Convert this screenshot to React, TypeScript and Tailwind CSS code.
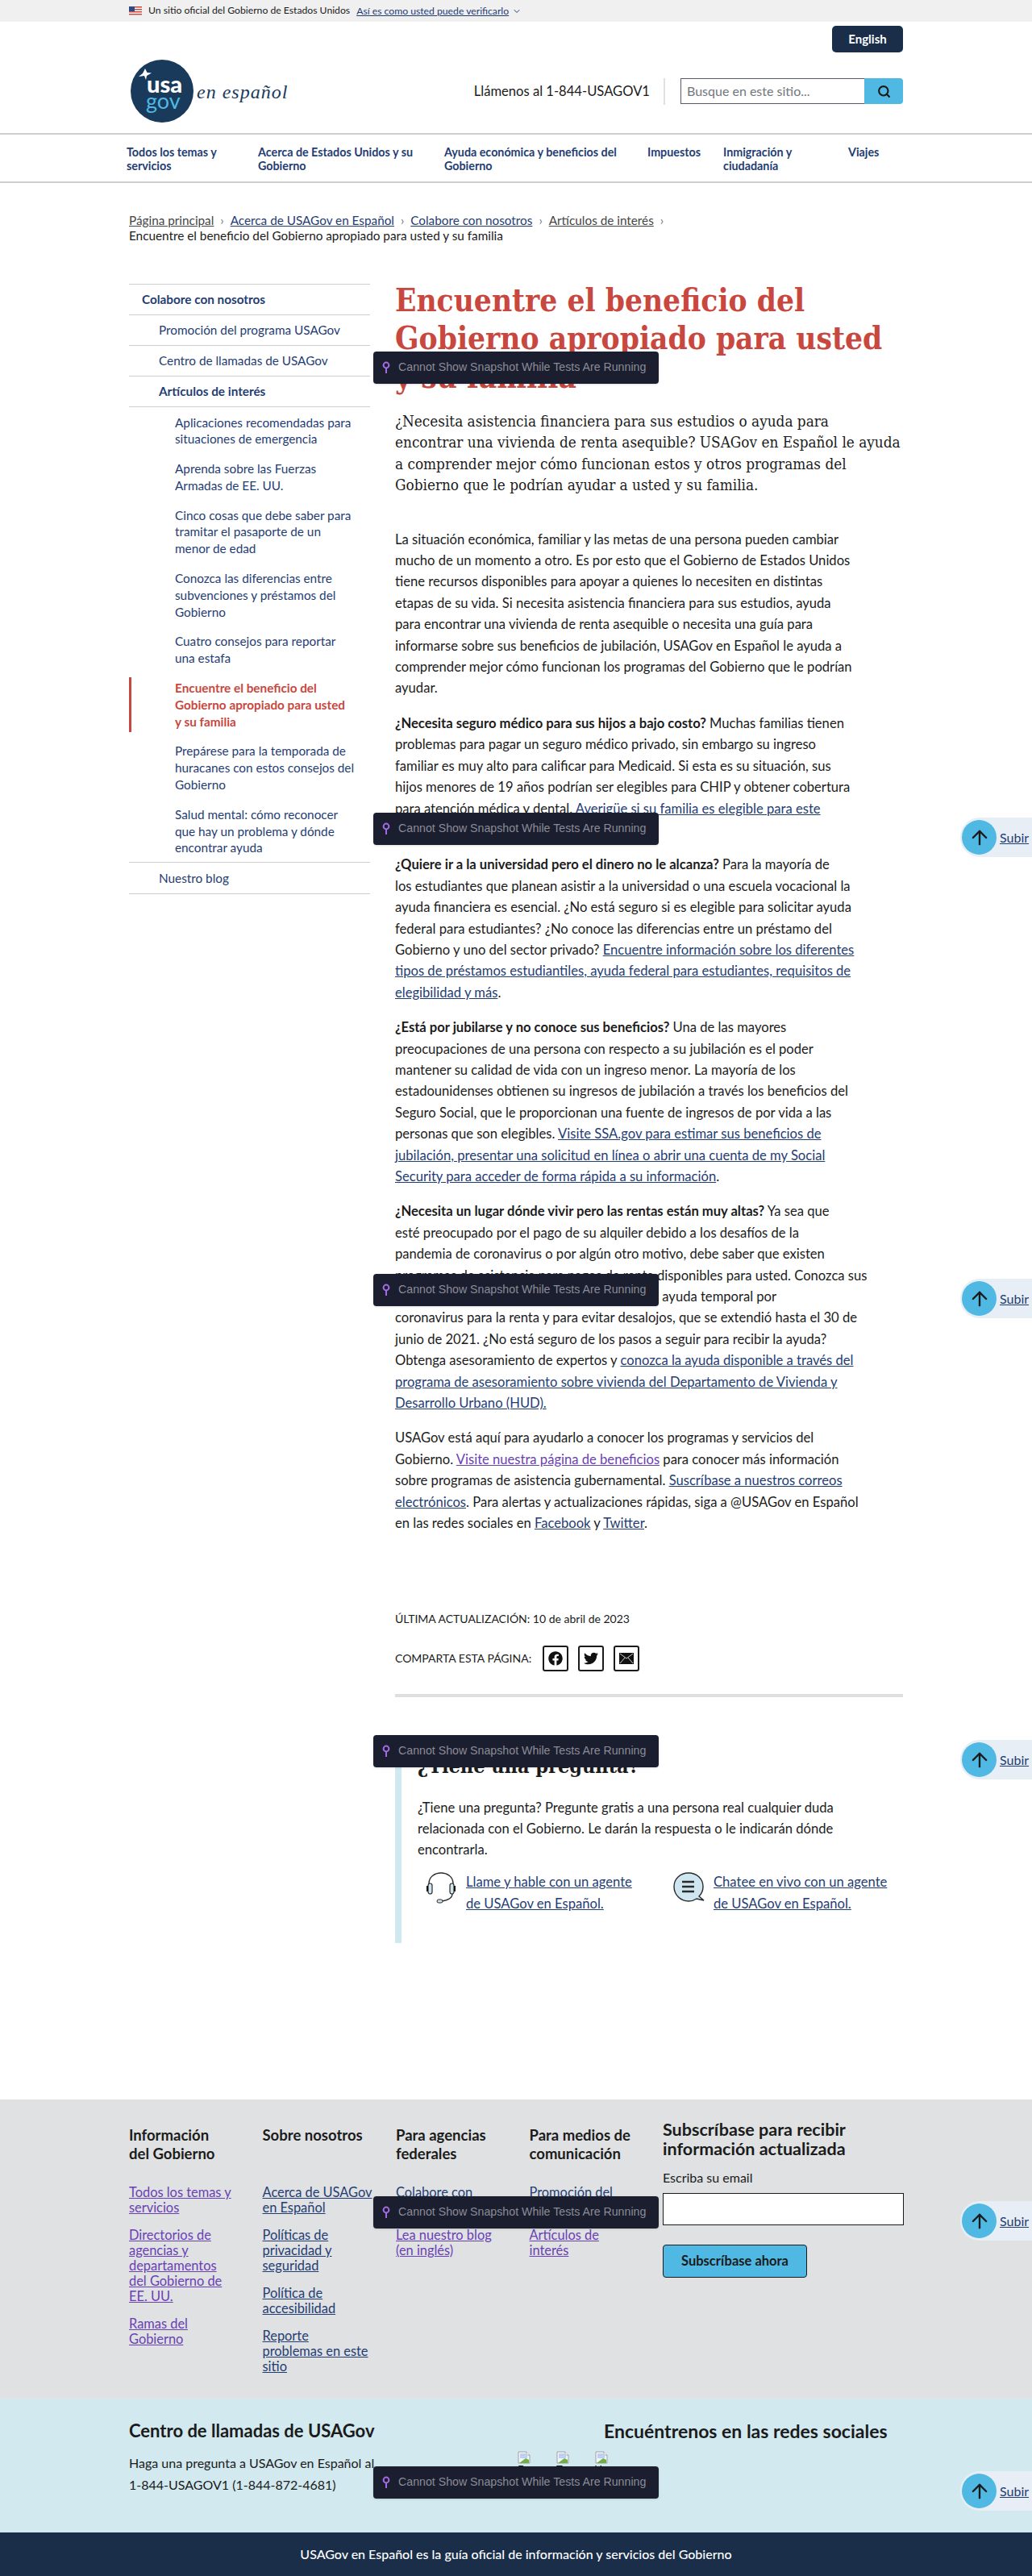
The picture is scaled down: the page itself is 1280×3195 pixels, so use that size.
import React from "react";
import { Search, ArrowUp, ChevronDown } from "lucide-react";
import { FaFacebook, FaTwitter } from "react-icons/fa";

const navItems = [
  "Todos los temas y servicios",
  "Acerca de Estados Unidos y su Gobierno",
  "Ayuda económica y beneficios del Gobierno",
  "Impuestos",
  "Inmigración y ciudadanía",
  "Viajes",
];

const subItems = [
  ["Aplicaciones recomendadas para", "situaciones de emergencia"],
  ["Aprenda sobre las Fuerzas", "Armadas de EE. UU."],
  ["Cinco cosas que debe saber para", "tramitar el pasaporte de un", "menor de edad"],
  ["Conozca las diferencias entre", "subvenciones y préstamos del", "Gobierno"],
  ["Cuatro consejos para reportar", "una estafa"],
  ["Encuentre el beneficio del", "Gobierno apropiado para usted", "y su familia"],
  ["Prepárese para la temporada de", "huracanes con estos consejos del", "Gobierno"],
  ["Salud mental: cómo reconocer", "que hay un problema y dónde", "encontrar ayuda"],
];

const footerCols = [
  {
    title: ["Información", "del Gobierno"],
    links: [
      { lines: ["Todos los temas y", "servicios"], seen: true },
      { lines: ["Directorios de", "agencias y", "departamentos", "del Gobierno de", "EE. UU."], seen: true },
      { lines: ["Ramas del", "Gobierno"], seen: true },
    ],
  },
  {
    title: ["Sobre nosotros"],
    links: [
      { lines: ["Acerca de USAGov", "en Español"], seen: false },
      { lines: ["Políticas de", "privacidad y", "seguridad"], seen: false },
      { lines: ["Política de", "accesibilidad"], seen: false },
      { lines: ["Reporte", "problemas en este", "sitio"], seen: false },
    ],
  },
  {
    title: ["Para agencias", "federales"],
    links: [
      { lines: ["Colabore con", "nosotros"], seen: false },
      { lines: ["Lea nuestro blog", "(en inglés)"], seen: true },
    ],
  },
  {
    title: ["Para medios de", "comunicación"],
    links: [
      { lines: ["Promoción del", "programa"], seen: false },
      { lines: ["Artículos de", "interés"], seen: true },
    ],
  },
];

const A = ({ children, seen }: { children: React.ReactNode; seen?: boolean }) => (
  <a href="#" className={seen ? "underline text-[#6a3fb5]" : "underline text-[#1f3d73]"}>
    {children}
  </a>
);

const Lines = ({ lines }: { lines: string[] }) => (
  <>
    {lines.map((l, i) => (
      <span key={i} className="block whitespace-nowrap">
        {l}
      </span>
    ))}
  </>
);

const SnapshotNotice = ({ top }: { top: string }) => (
  <div className={`absolute left-[463px] w-[354px] h-10 bg-[#1b1e2e] rounded-[4px] shadow flex items-center pl-[11px] gap-[10px] ${top}`}>
    <svg width="10" height="16" viewBox="0 0 10 16" fill="none">
      <circle cx="5" cy="5" r="3.4" stroke="#a06ce4" strokeWidth="2" />
      <path d="M5 8.5V15" stroke="#a06ce4" strokeWidth="2" />
    </svg>
    <span className="font-['Liberation_Sans',sans-serif] text-[14.2px] text-[#8a8b98] whitespace-nowrap">
      Cannot Show Snapshot While Tests Are Running
    </span>
  </div>
);

const Subir = ({ top }: { top: string }) => (
  <div className={`absolute left-[1191px] w-[89px] h-[49px] bg-[#e8eef5] rounded-l-[24px] flex items-center pl-[2px] gap-1 ${top}`}>
    <div className="w-[43px] h-[43px] rounded-full bg-[#4fb8e3] flex items-center justify-center">
      <ArrowUp size={28} color="#1b1b1b" strokeWidth={2} />
    </div>
    <a href="#" className="underline text-[#1f3d73] text-[16px]">
      Subir
    </a>
  </div>
);

const BrokenImage = ({ alt }: { alt: string }) => (
  <div className="w-[16px] h-[30px] overflow-hidden text-[13px] leading-[15px] text-[#1b1b1b]">
    <svg width="16" height="16" viewBox="0 0 16 16">
      <path d="M1 1h10l4 4v10H1z" fill="#f3f6fb" stroke="#a0a0a0" />
      <path d="M11 1v4h4" fill="#fff" stroke="#a0a0a0" />
      <rect x="3" y="3" width="9" height="6" fill="#bcd0f0" />
      <path d="M2 15l8-6 4 2v4z" fill="#6fb044" />
    </svg>
    {alt}
  </div>
);

export default function App() {
  return (
    <div className="relative h-[3195px] overflow-hidden bg-white text-[#1b1b1b] font-['Lato',sans-serif]">
      {/* gov banner */}
      <div className="h-[27px] bg-[#f0f0f0] pl-[160px] flex items-center text-[12.2px]">
        <svg width="16" height="11" viewBox="0 0 16 11" className="mr-2">
          <rect width="16" height="11" fill="#fff" />
          <path d="M0 0h16v1.5H0zM0 3h16v1.5H0zM0 6h16v1.5H0zM0 9h16v1.5H0z" fill="#c8473e" />
          <rect width="7" height="6" fill="#2c4a85" />
        </svg>
        <span>Un sitio oficial del Gobierno de Estados Unidos</span>
        <a href="#" className="underline text-[#1f3d73] ml-2 mt-[2px]">
          Así es como usted puede verificarlo
        </a>
        <ChevronDown size={12} className="ml-1 text-[#1f3d73]" />
      </div>

      {/* header */}
      <div className="h-[139.5px] border-b-2 border-[#cfcfcf] px-[160px] pt-[5px]">
        <div className="flex justify-end">
          <button className="w-[88px] h-[33px] rounded-[5px] bg-[#1a2e4a] text-white font-bold text-[15px]">English</button>
        </div>
        <div className="flex items-center justify-between mt-[9px]">
          <div className="flex items-center">
            <svg width="200" height="78" viewBox="0 0 200 78">
              <circle cx="41" cy="39" r="39" fill="#1a3a5c" />
              <path d="M20 11l2.5 5 5.5 .5-6 3.5-1 5-2-5-7 1 5-4z" fill="#fff" />
              <text x="22" y="41" fill="#fff" fontFamily="Lato, sans-serif" fontWeight="900" fontSize="29">usa</text>
              <text x="21" y="61" fill="#4fb8e3" fontFamily="Lato, sans-serif" fontSize="27">gov</text>
              <text x="84" y="48" fill="#1a3a5c" fontFamily="'Liberation Serif', serif" fontStyle="italic" fontSize="24" letterSpacing="1">en español</text>
            </svg>
          </div>
          <div className="flex items-center">
            <span className="text-[16.6px] mr-[17px] whitespace-nowrap">Llámenos al 1-844-USAGOV1</span>
            <div className="w-[2px] h-[33px] bg-[#dfe1e2] mr-[19px]" />
            <div className="w-[228px] h-8 border border-[#565c65] border-r-0 pl-[7px] flex items-center text-[16px] text-[#71767a]">Busque en este sitio...</div>
            <div className="w-12 h-8 bg-[#4fb8e3] rounded-r-[4px] flex items-center justify-center">
              <Search size={17} color="#1b1b1b" strokeWidth={3} />
            </div>
          </div>
        </div>
      </div>

      {/* nav */}
      <div className="h-[60px] border-b-2 border-[#cfcfcf] pl-[157px] pt-[13px]">
        <div className="grid grid-cols-[163px_231px_252px_94px_155px_auto] font-bold text-[#1f3d73] text-[14.3px] leading-[17px]">
          {navItems.map((n) => (
            <a key={n} href="#" className="pr-[16px]">
              {n}
            </a>
          ))}
        </div>
      </div>

      {/* breadcrumb */}
      <div className="pl-[160px] pt-[37px] h-[125px] text-[15.3px] leading-[19px]">
        <div className="flex items-center gap-[8px]">
          <a href="#" className="underline text-[#454545]">Página principal</a>
          <span className="text-[#71767a]">›</span>
          <A>Acerca de USAGov en Español</A>
          <span className="text-[#71767a]">›</span>
          <A>Colabore con nosotros</A>
          <span className="text-[#71767a]">›</span>
          <a href="#" className="underline text-[#454545]">Artículos de interés</a>
          <span className="text-[#71767a]">›</span>
        </div>
        <div>Encuentre el beneficio del Gobierno apropiado para usted y su familia</div>
      </div>

      {/* main */}
      <div className="flex pl-[160px] gap-[31px] h-[2252px]">
        <aside className="w-[299px] shrink-0 text-[#1f3d73] text-[15.3px]">
          <div className="border-y border-[#cfcfcf] h-[39px] pl-4 flex items-center font-bold">Colabore con nosotros</div>
          <div className="border-b border-[#cfcfcf] h-[38px] pl-[37px] flex items-center">Promoción del programa USAGov</div>
          <div className="border-b border-[#cfcfcf] h-[38px] pl-[37px] flex items-center">Centro de llamadas de USAGov</div>
          <div className="border-b border-[#cfcfcf] h-[38px] pl-[37px] flex items-center font-bold">Artículos de interés</div>
          <div className="flex flex-col pt-[9px] leading-[20.8px] gap-[16px] pb-[7px] border-b border-[#cfcfcf]">
            {subItems.map((s, i) => (
              <div
                key={i}
                className={i === 5 ? "pl-[54px] border-l-[3px] border-[#c8473e] text-[#c8473e] font-bold py-[3px] -my-[3px]" : "pl-[57px]"}
              >
                <Lines lines={s} />
              </div>
            ))}
          </div>
          <div className="border-b border-[#cfcfcf] h-[39px] pl-[37px] flex items-center">Nuestro blog</div>
        </aside>

        <main className="w-[630px]">
          <h1 className="font-['DejaVu_Serif_Condensed','DejaVu_Serif',serif] font-bold text-[38.5px] leading-[47.5px] text-[#c8473e] whitespace-nowrap -mt-[3px]">
            Encuentre el beneficio del
            <br />
            Gobierno apropiado para usted
            <br />y su familia
          </h1>
          <p className="font-['DejaVu_Serif_Condensed','DejaVu_Serif',serif] text-[18.8px] leading-[26.4px] mt-[19px] whitespace-nowrap">
            ¿Necesita asistencia financiera para sus estudios o ayuda para
            <br />
            encontrar una vivienda de renta asequible? USAGov en Español le ayuda
            <br />a comprender mejor cómo funcionan estos y otros programas del
            <br />
            Gobierno que le podrían ayudar a usted y su familia.
          </p>

          <div className="mt-[40px] text-[16.6px] leading-[26.4px] whitespace-nowrap [&>p]:mb-[17px]">
            <p>
              La situación económica, familiar y las metas de una persona pueden cambiar
              <br />
              mucho de un momento a otro. Es por esto que el Gobierno de Estados Unidos
              <br />
              tiene recursos disponibles para apoyar a quienes lo necesiten en distintas
              <br />
              etapas de su vida. Si necesita asistencia financiera para sus estudios, ayuda
              <br />
              para encontrar una vivienda de renta asequible o necesita una guía para
              <br />
              informarse sobre sus beneficios de jubilación, USAGov en Español le ayuda a
              <br />
              comprender mejor cómo funcionan los programas del Gobierno que le podrían
              <br />
              ayudar.
            </p>
            <p>
              <b>¿Necesita seguro médico para sus hijos a bajo costo?</b> Muchas familias tienen
              <br />
              problemas para pagar un seguro médico privado, sin embargo su ingreso
              <br />
              familiar es muy alto para calificar para Medicaid. Si esta es su situación, sus
              <br />
              hijos menores de 19 años podrían ser elegibles para CHIP y obtener cobertura
              <br />
              para atención médica y dental. <A>Averigüe si su familia es elegible para este</A>
              <br />
              <A>programa</A>.
            </p>
            <p>
              <b>¿Quiere ir a la universidad pero el dinero no le alcanza?</b> Para la mayoría de
              <br />
              los estudiantes que planean asistir a la universidad o una escuela vocacional la
              <br />
              ayuda financiera es esencial. ¿No está seguro si es elegible para solicitar ayuda
              <br />
              federal para estudiantes? ¿No conoce las diferencias entre un préstamo del
              <br />
              Gobierno y uno del sector privado? <A>Encuentre información sobre los diferentes</A>
              <br />
              <A>tipos de préstamos estudiantiles, ayuda federal para estudiantes, requisitos de</A>
              <br />
              <A>elegibilidad y más</A>.
            </p>
            <p>
              <b>¿Está por jubilarse y no conoce sus beneficios?</b> Una de las mayores
              <br />
              preocupaciones de una persona con respecto a su jubilación es el poder
              <br />
              mantener su calidad de vida con un ingreso menor. La mayoría de los
              <br />
              estadounidenses obtienen su ingresos de jubilación a través los beneficios del
              <br />
              Seguro Social, que le proporcionan una fuente de ingresos de por vida a las
              <br />
              personas que son elegibles. <A>Visite SSA.gov para estimar sus beneficios de</A>
              <br />
              <A>jubilación, presentar una solicitud en línea o abrir una cuenta de my Social</A>
              <br />
              <A>Security para acceder de forma rápida a su información</A>.
            </p>
            <p>
              <b>¿Necesita un lugar dónde vivir pero las rentas están muy altas?</b> Ya sea que
              <br />
              esté preocupado por el pago de su alquiler debido a los desafíos de la
              <br />
              pandemia de coronavirus o por algún otro motivo, debe saber que existen
              <br />
              programas de asistencia para pagos de renta disponibles para usted. Conozca sus
              <br />
              derechos y obtenga más información sobre la ayuda temporal por
              <br />
              coronavirus para la renta y para evitar desalojos, que se extendió hasta el 30 de
              <br />
              junio de 2021. ¿No está seguro de los pasos a seguir para recibir la ayuda?
              <br />
              Obtenga asesoramiento de expertos y <A>conozca la ayuda disponible a través del</A>
              <br />
              <A>programa de asesoramiento sobre vivienda del Departamento de Vivienda y</A>
              <br />
              <A>Desarrollo Urbano (HUD).</A>
            </p>
            <p>
              USAGov está aquí para ayudarlo a conocer los programas y servicios del
              <br />
              Gobierno. <A seen>Visite nuestra página de beneficios</A> para conocer más información
              <br />
              sobre programas de asistencia gubernamental. <A>Suscríbase a nuestros correos</A>
              <br />
              <A>electrónicos</A>. Para alertas y actualizaciones rápidas, siga a @USAGov en Español
              <br />
              en las redes sociales en <A>Facebook</A> y <A>Twitter</A>.
            </p>
          </div>

          <div className="mt-[95px] text-[14px] leading-[20px]">ÚLTIMA ACTUALIZACIÓN: 10 de abril de 2023</div>
          <div className="flex items-center mt-[23px] text-[14px]">
            <span className="w-[183px]">COMPARTA ESTA PÁGINA:</span>
            <div className="flex gap-3">
              <div className="w-8 h-8 border-2 border-[#1b1b1b] rounded-[3px] flex items-center justify-center">
                <FaFacebook size={18} color="#111" />
              </div>
              <div className="w-8 h-8 border-2 border-[#1b1b1b] rounded-[3px] flex items-center justify-center">
                <FaTwitter size={18} color="#111" />
              </div>
              <div className="w-8 h-8 border-2 border-[#1b1b1b] rounded-[3px] flex items-center justify-center">
                <svg width="18" height="14" viewBox="0 0 18 14">
                  <rect width="18" height="14" fill="#111" />
                  <path d="M1 1l8 6 8-6M1 13l6-7M17 13l-6-7" stroke="#fff" strokeWidth="0.8" fill="none" />
                </svg>
              </div>
            </div>
          </div>
          <div className="h-1 bg-[#dfdfdf] mt-[28px]" />

          <section className="mt-[68px] border-l-8 border-[#d0e8ef] h-[237px] pl-5">
            <h2 className="font-['DejaVu_Serif_Condensed','DejaVu_Serif',serif] font-bold text-[25px] leading-[32px] pt-[2px]">¿Tiene una pregunta?</h2>
            <p className="text-[16.6px] leading-[26.4px] mt-[22px] whitespace-nowrap">
              ¿Tiene una pregunta? Pregunte gratis a una persona real cualquier duda
              <br />
              relacionada con el Gobierno. Le darán la respuesta o le indicarán dónde
              <br />
              encontrarla.
            </p>
            <div className="flex mt-[13px] text-[16.6px] leading-[27px]">
              <div className="flex w-[316px] pl-[9px]">
                <svg width="42" height="42" viewBox="0 0 42 42" fill="none" className="mr-[9px] shrink-0">
                  <path d="M5 20V15C5 7 12 2 20 2s15 5 15 13v5" stroke="#2a2a2a" strokeWidth="1.4" />
                  <rect x="4" y="15" width="5" height="13" rx="2.5" fill="#cfe6f1" stroke="#2a2a2a" strokeWidth="1.2" />
                  <rect x="31" y="15" width="5" height="13" rx="2.5" fill="#cfe6f1" stroke="#2a2a2a" strokeWidth="1.2" />
                  <path d="M3 18v7M37 18v7" stroke="#111" strokeWidth="2" />
                  <path d="M34 28c0 6-6 8-14 9" stroke="#2a2a2a" strokeWidth="1.4" />
                  <rect x="15" y="35" width="7" height="4" rx="2" fill="#cfe6f1" stroke="#2a2a2a" />
                </svg>
                <A>
                  <Lines lines={["Llame y hable con un agente", "de USAGov en Español."]} />
                </A>
              </div>
              <div className="flex">
                <svg width="42" height="42" viewBox="0 0 42 42" fill="none" className="mr-[9px] shrink-0">
                  <path d="M20 2c10 0 18 7 18 17 0 5-2 9-5 12l6 5-9-2c-3 2-6 3-10 3C10 37 2 29 2 19S10 2 20 2z" fill="#cfe6f1" stroke="#2a2a2a" strokeWidth="1.4" />
                  <path d="M12 13h15M12 19h15M12 25h15" stroke="#2a2a2a" strokeWidth="2.4" />
                </svg>
                <A>
                  <Lines lines={["Chatee en vivo con un agente", "de USAGov en Español."]} />
                </A>
              </div>
            </div>
          </section>
        </main>
      </div>

      {/* footer links */}
      <div className="h-[371px] bg-[#dfe1e2] pl-[160px] flex">
        {footerCols.map((c, i) => (
          <div key={i} className="w-[165.5px] pt-[33px] shrink-0">
            <div className="font-bold text-[18.5px] leading-[23px] h-[72px]">
              <Lines lines={c.title} />
            </div>
            <div className="flex flex-col gap-[15px] text-[16.4px] leading-[19px]">
              {c.links.map((l, j) => (
                <A key={j} seen={l.seen}>
                  <Lines lines={l.lines} />
                </A>
              ))}
            </div>
          </div>
        ))}
        <div className="w-[299px] pt-[25px]">
          <div className="font-bold text-[21.5px] leading-[24px] whitespace-nowrap">
            Subscríbase para recibir
            <br />
            información actualizada
          </div>
          <div className="text-[16px] leading-[20px] mt-[14px]">Escriba su email</div>
          <div className="h-10 bg-white border border-[#1b1b1b] mt-[9px]" />
          <button className="w-[179px] h-[41px] mt-[24px] bg-[#4fb8e3] border border-[#1b1b1b] rounded-[4px] font-bold text-[16.5px]">Subscríbase ahora</button>
        </div>
      </div>

      {/* call center */}
      <div className="h-[166px] bg-[#d1e9ef] pl-[160px] flex">
        <div className="w-[482px] pt-[25px]">
          <div className="font-bold text-[22px] leading-[30px]">Centro de llamadas de USAGov</div>
          <div className="text-[16px] leading-[27px] mt-[11px]">
            Haga una pregunta a USAGov en Español al
            <br />
            1-844-USAGOV1 (1-844-872-4681)
          </div>
        </div>
        <div className="flex gap-[32px] pt-[65px] items-start">
          <BrokenImage alt="Facebook" />
          <BrokenImage alt="Twitter" />
          <BrokenImage alt="YouTube" />
        </div>
        <div className="absolute left-[749px] top-[3000px] font-bold text-[23px] leading-[30px]">Encuéntrenos en las redes sociales</div>
      </div>

      <div className="h-[54px] bg-[#1a2e4a] text-white text-[16px] font-medium flex items-center justify-center">USAGov en Español es la guía oficial de información y servicios del Gobierno</div>

      <SnapshotNotice top="top-[436px]" />
      <SnapshotNotice top="top-[1008px]" />
      <SnapshotNotice top="top-[1580px]" />
      <SnapshotNotice top="top-[2152px]" />
      <SnapshotNotice top="top-[2724px]" />
      <SnapshotNotice top="top-[3059px]" />
      <Subir top="top-[1014px]" />
      <Subir top="top-[1586px]" />
      <Subir top="top-[2158px]" />
      <Subir top="top-[2730px]" />
      <Subir top="top-[3065px]" />
    </div>
  );
}
